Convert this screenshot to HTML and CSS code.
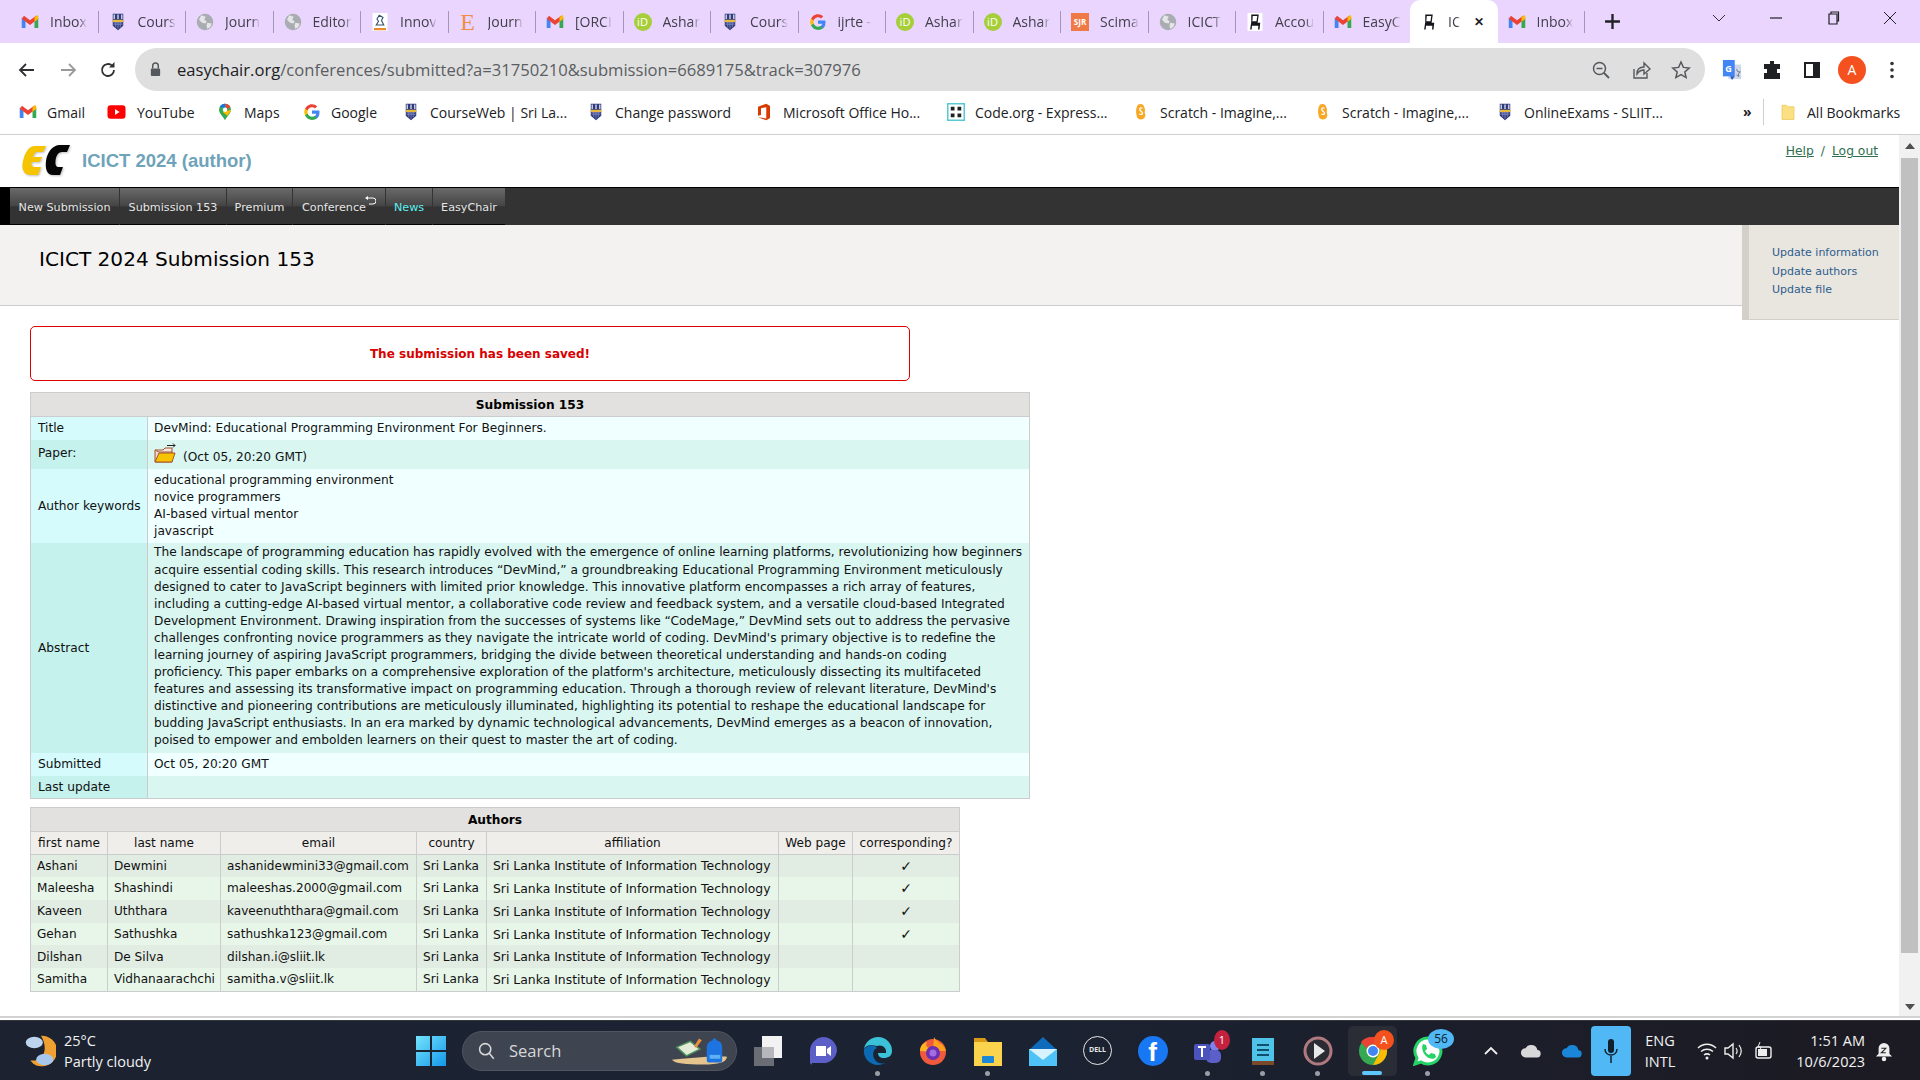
FILE: index.html
```html
<!DOCTYPE html>
<html lang="en">
<head>
<meta charset="utf-8">
<title>ICICT 2024 Submission 153</title>
<link rel="stylesheet" href="styles.css">
</head>
<body>
<svg class="defs" width="0" height="0" aria-hidden="true">
  <defs>
    <linearGradient id="wing" x1="0" y1="0" x2="1" y2="1"><stop offset="0" stop-color="#74e4fc"/><stop offset="1" stop-color="#1497ea"/></linearGradient>
  </defs>
  <symbol id="gmail" viewBox="0 0 24 24">
    <path d="M1 6v14h5V10z" fill="#4285f4"/><path d="M23 6v14h-5V10z" fill="#34a853"/>
    <path d="M1 7.500 4 3.500l8 6 8-6 3 4-11 8.500z" fill="#ea4335"/><path d="M18 6l2-2.500c1.500-1 3-.3 3 1.500v3l-5 3.500z" fill="#fbbc04"/>
  </symbol>
  <symbol id="sliit" viewBox="0 0 18 24">
    <path d="M2 1h14v16l-7 6-7-6z" fill="#2e3a7c"/><rect x="3" y="2" width="2" height="6" fill="#c9cbe0"/><rect x="8" y="2" width="2" height="6" fill="#c9cbe0"/><rect x="13" y="2" width="2" height="6" fill="#c9cbe0"/>
    <rect x="2" y="9" width="14" height="3" fill="#e8b93a"/><path d="M3 13h12M3 15h12M6 12v7M9 12v9M12 12v7" stroke="#8b90c0" stroke-width="1"/>
  </symbol>
  <symbol id="globe" viewBox="0 0 24 24">
    <circle cx="12" cy="12" r="11" fill="#a9adb2"/><path d="M7 3l6 2-2 4 3 2-1 3-5-1-4-4zM15 13l6 1-2 5-4 2-1-4z" fill="#e4e5e7"/>
  </symbol>
  <symbol id="chair" viewBox="0 0 20 24">
    <rect width="20" height="24" fill="#fff"/><path d="M5 2h10l-1.500 11H17l-1 9h-2l.5-5H6l-.5 5h-2L5 12z" fill="#14141c"/><path d="M7 4h6l-1 7H6.500z" fill="#fff"/>
  </symbol>
  <symbol id="gg" viewBox="0 0 24 24">
    <path d="M22 12.300c0-.8-.1-1.500-.2-2.200H12v4.200h5.700a5 5 0 0 1-2.100 3.200v2.700h3.400c2-1.800 3-4.600 3-7.900z" fill="#4285f4"/>
    <path d="M12 22.500c2.800 0 5.200-.9 7-2.500l-3.400-2.700c-1 .6-2.200 1-3.600 1-2.700 0-5-1.800-5.800-4.300H2.700v2.800a10.500 10.500 0 0 0 9.300 5.700z" fill="#34a853"/>
    <path d="M6.200 14a6.300 6.300 0 0 1 0-4V7.200H2.700a10.500 10.500 0 0 0 0 9.600z" fill="#fbbc04"/>
    <path d="M12 5.700c1.500 0 2.900.5 4 1.500l3-3A10.500 10.500 0 0 0 2.700 7.200L6.200 10C7 7.500 9.300 5.700 12 5.700z" fill="#ea4335"/>
  </symbol>
  <symbol id="scratch" viewBox="0 0 16 24">
    <path d="M4 2c4-2 8 0 8 3 2 3 1 5 1 8 2 4 0 9-5 9-3 0-6-2-6-6-1-4-1-10 2-14z" fill="#f9a825"/><path d="M10 7c-4-2-5 2-2 4s3 5-2 4" fill="none" stroke="#fff" stroke-width="1.800"/>
  </symbol>
</svg>

<header class="tabstrip">
  <div class="tab"><svg class="fav"><use href="#gmail"/></svg><span class="tab-label">Inbox</span></div>
  <div class="tab"><svg class="fav"><use href="#sliit"/></svg><span class="tab-label">Cours</span></div>
  <div class="tab"><svg class="fav"><use href="#globe"/></svg><span class="tab-label">Journ</span></div>
  <div class="tab"><svg class="fav"><use href="#globe"/></svg><span class="tab-label">Editor</span></div>
  <div class="tab"><svg class="fav" viewBox="0 0 20 24"><rect width="20" height="24" fill="#fff"/><path d="M9 3l5 3-2 4 3 6H5l3-5-2-3z" fill="none" stroke="#35506b" stroke-width="1.500"/><rect x="2" y="20" width="16" height="3" fill="#e98a2e"/></svg><span class="tab-label">Innov</span></div>
  <div class="tab"><span class="fav fav-e">E</span><span class="tab-label">Journ</span></div>
  <div class="tab"><svg class="fav"><use href="#gmail"/></svg><span class="tab-label">[ORCI</span></div>
  <div class="tab"><span class="fav fav-orcid">iD</span><span class="tab-label">Ashar</span></div>
  <div class="tab"><svg class="fav"><use href="#sliit"/></svg><span class="tab-label">Cours</span></div>
  <div class="tab"><svg class="fav"><use href="#gg"/></svg><span class="tab-label">ijrte -</span></div>
  <div class="tab"><span class="fav fav-orcid">iD</span><span class="tab-label">Ashar</span></div>
  <div class="tab"><span class="fav fav-orcid">iD</span><span class="tab-label">Ashar</span></div>
  <div class="tab"><span class="fav fav-sjr">SJR</span><span class="tab-label">Scima</span></div>
  <div class="tab"><svg class="fav"><use href="#globe"/></svg><span class="tab-label">ICICT</span></div>
  <div class="tab"><svg class="fav"><use href="#chair"/></svg><span class="tab-label">Accou</span></div>
  <div class="tab tab-before"><svg class="fav"><use href="#gmail"/></svg><span class="tab-label">EasyC</span></div>
  <div class="tab tab-active"><svg class="fav"><use href="#chair"/></svg><span class="tab-label tab-label-short">IC</span><span class="tab-x">✕</span></div>
  <div class="tab"><svg class="fav"><use href="#gmail"/></svg><span class="tab-label">Inbox</span></div>
  <svg class="newtab" viewBox="0 0 16 16"><path d="M8 1v14M1 8h14" stroke="#202124" stroke-width="2.200"/></svg>
  <div class="winctl">
    <svg class="winicon" viewBox="0 0 14 14"><path d="M1 4l6 6 6-6" fill="none" stroke="#333" stroke-width="1"/></svg>
    <svg class="winicon" viewBox="0 0 14 14"><path d="M1 7h12" stroke="#222" stroke-width="1.200"/></svg>
    <svg class="winicon" viewBox="0 0 14 14"><path d="M3 3h8v10H3zM5 3V1h7.500v9H11" fill="none" stroke="#222" stroke-width="1.200"/></svg>
    <svg class="winicon" viewBox="0 0 14 14"><path d="M1 1l12 12M13 1L1 13" stroke="#222" stroke-width="1"/></svg>
  </div>
</header>

<div class="toolbar">
  <svg class="tool" viewBox="0 0 20 20"><path d="M17 10H3M9 4l-6 6 6 6" fill="none" stroke="#2f3033" stroke-width="1.800"/></svg>
  <svg class="tool" viewBox="0 0 20 20"><path d="M3 10h14M11 4l6 6-6 6" fill="none" stroke="#9a9a9d" stroke-width="1.800"/></svg>
  <svg class="tool tool-reload" viewBox="0 0 20 20"><path d="M16 10a6 6 0 1 1-1.800-4.300" fill="none" stroke="#2f3033" stroke-width="1.800"/><path d="M16.500 2v5.500H11z" fill="#2f3033"/></svg>
  <div class="omnibox">
    <svg class="lock" viewBox="0 0 14 18"><path d="M4 8V5a3 3 0 0 1 6 0v3" fill="none" stroke="#55585c" stroke-width="1.600"/><rect x="2" y="8" width="10" height="8" rx="1" fill="#55585c"/></svg>
    <span class="url"><span class="url-host">easychair.org</span>/conferences/submitted?a=31750210&amp;submission=6689175&amp;track=307976</span>
    <svg class="omni-icon" viewBox="0 0 20 20"><circle cx="8.500" cy="8.500" r="6" fill="none" stroke="#55585c" stroke-width="1.500"/><path d="M13 13l5 5" stroke="#55585c" stroke-width="1.800"/><path d="M5.500 8.500h6" stroke="#55585c" stroke-width="1.500"/></svg>
    <svg class="omni-icon" viewBox="0 0 20 20"><path d="M3 9v9h13v-5" fill="none" stroke="#55585c" stroke-width="1.400"/><path d="M6 14c0-5 3-7 7-7V3l6 6-6 5v-4c-3 0-5 1-7 4z" fill="none" stroke="#55585c" stroke-width="1.400"/></svg>
    <svg class="omni-icon" viewBox="0 0 20 20"><path d="M10 2l2.400 5.400 5.800.6-4.400 3.900 1.300 5.700L10 14.700l-5.100 2.900 1.300-5.700L1.800 8l5.800-.6z" fill="none" stroke="#55585c" stroke-width="1.500"/></svg>
  </div>
  <div class="tool-right">
    <svg class="ext" viewBox="0 0 22 24"><rect x="7" y="6" width="14" height="16" fill="#cfd8ea"/><path d="M1 1h13v18H1z" fill="#4285f4"/><path d="M9 19h5l-3 4z" fill="#2a56c6"/><text class="ext-g" x="3.500" y="14">G</text><path d="M16 11l1.200 2.800 3 .3-2.200 2 .6 3-2.600-1.500" fill="none" stroke="#6b7280" stroke-width="1"/></svg>
    <svg class="ext" viewBox="0 0 20 20"><path d="M8 1h4v3h6v5h-3v4h3v6H2v-6h3V9H2V4h6z" fill="#1f2023"/></svg>
    <svg class="ext" viewBox="0 0 20 20"><rect x="2" y="2" width="16" height="16" fill="#1f2023"/><rect x="4" y="4" width="7" height="12" fill="#fff"/></svg>
    <span class="avatar">A</span>
    <svg class="ext" viewBox="0 0 20 20"><circle cx="10" cy="3.500" r="1.800" fill="#333"/><circle cx="10" cy="10" r="1.800" fill="#333"/><circle cx="10" cy="16.500" r="1.800" fill="#333"/></svg>
  </div>
</div>

<nav class="bookmarks">
  <span class="bm bm-gmail"><svg class="fav"><use href="#gmail"/></svg>Gmail</span>
  <span class="bm bm-yt"><svg class="fav fav-wide" viewBox="0 0 24 24"><rect x="0" y="3" width="24" height="18" rx="4" fill="#f00"/><path d="M10 8v8l6-4z" fill="#fff"/></svg>YouTube</span>
  <span class="bm bm-maps"><svg class="fav" viewBox="0 0 24 24"><path d="M12 1a8 8 0 0 1 8 8c0 5-5 8-8 14C9 17 4 14 4 9a8 8 0 0 1 8-8z" fill="#34a853"/><path d="M5 5a8 8 0 0 1 7-4v6z" fill="#1a73e8"/><path d="M12 1a8 8 0 0 1 7 4l-5 4z" fill="#ea4335"/><path d="M20 9c0 3-3 5-5 8L9 12z" fill="#fbbc04"/><circle cx="12" cy="9" r="3" fill="#fff"/></svg>Maps</span>
  <span class="bm bm-google"><svg class="fav"><use href="#gg"/></svg>Google</span>
  <span class="bm bm-cw"><svg class="fav"><use href="#sliit"/></svg>CourseWeb | Sri La...</span>
  <span class="bm bm-pw"><svg class="fav"><use href="#sliit"/></svg>Change password</span>
  <span class="bm bm-ms"><svg class="fav" viewBox="0 0 24 24"><path d="M4 5l11-4 5 3v16l-5 3-11-4 11 1.500V5.500L8 7v9l-4 1z" fill="#d83b01"/></svg>Microsoft Office Ho...</span>
  <span class="bm bm-code"><svg class="fav" viewBox="0 0 24 24"><rect x="1" y="1" width="22" height="22" fill="#fff" stroke="#59cad3" stroke-width="2"/><path d="M5 5h5v5H5zM14 5h5v5h-5zM5 14h5v5H5zM14 14h5v5h-5z" fill="#222"/></svg>Code.org - Express...</span>
  <span class="bm bm-sc"><svg class="fav"><use href="#scratch"/></svg>Scratch - Imagine,...</span>
  <span class="bm bm-sc"><svg class="fav"><use href="#scratch"/></svg>Scratch - Imagine,...</span>
  <span class="bm bm-oe"><svg class="fav"><use href="#sliit"/></svg>OnlineExams - SLIIT...</span>
  <span class="bm-more">»</span>
  <span class="bm bm-all"><svg class="fav" viewBox="0 0 24 24"><path d="M4 3h6l2 2h8v17H4z" fill="#fbe083" stroke="#e9c75a"/></svg>All Bookmarks</span>
</nav>

<main class="viewport">
  <div class="page">
    <div class="ec-head">
      <div class="ec-brand">
        <svg class="ec-logo" viewBox="0 0 48 32">
          <path d="M13 1h11l-3 6h-6c-2 0-3 2-4 5h9l-2.500 5h-8c-.5 3 .5 5 3 5h6.500l-3 8H8C2 30-1 24 1 16 3 7 7 1 13 1z" fill="#f6c400"/>
          <path d="M38 0h10l-3 7h-5c-4 0-6 4-6.500 9-.3 4 .5 6 3.500 6h4l-3 8h-7c-6 0-8-6-7-14S30 0 38 0z" fill="#050505"/>
        </svg>
        <span class="ec-title">ICICT 2024 (author)</span>
      </div>
      <div class="ec-user"><a class="ec-link">Help</a><span class="ec-slash">/</span><a class="ec-link">Log out</a></div>
    </div>
    <div class="menubar">
      <span class="mi mi-1">New Submission</span>
      <span class="mi mi-2">Submission 153</span>
      <span class="mi mi-3">Premium</span>
      <span class="mi mi-4">Conference<svg class="mi-ret" viewBox="0 0 12 10"><path d="M3 2h6a2 2 0 0 1 0 6H5" fill="none" stroke="#fff"/><path d="M4 0L1 2l3 2z" fill="#fff"/></svg></span>
      <span class="mi mi-5 mi-news">News</span>
      <span class="mi mi-6">EasyChair</span>
    </div>
    <div class="titlebar"><h1 class="page-title">ICICT 2024 Submission 153</h1></div>
    <aside class="side">
      <a class="side-link">Update information</a>
      <a class="side-link">Update authors</a>
      <a class="side-link">Update file</a>
    </aside>
    <div class="content">
      <div class="alert">The submission has been saved!</div>
      <table class="info">
        <colgroup><col class="ci-1"><col class="ci-2"></colgroup>
        <thead><tr><th colspan="2" class="t-head">Submission 153</th></tr></thead>
        <tbody>
          <tr class="r-title"><td class="lab">Title</td><td class="val">DevMind: Educational Programming Environment For Beginners.</td></tr>
          <tr class="r-paper"><td class="lab lab-top">Paper:</td><td class="val val-paper"><div class="paper-cell"><svg class="folder" viewBox="0 0 22 20"><path d="M1 7h8l2-2h7v4" fill="#f3e7e0" stroke="#a8502a"/><path d="M1 19V7l4 2h13v10z" fill="#e9dcd4" stroke="#a8502a"/><path d="M1 19l4-9h16l-3 9z" fill="#f6c400" stroke="#a8502a"/><path d="M13 2.500h8M19 .5l2 2-2 2" fill="none" stroke="#222"/></svg><span class="paper-date">(Oct 05, 20:20 GMT)</span></div></td></tr>
          <tr class="r-kw"><td class="lab">Author keywords</td><td class="val val-lines">educational programming environment<br>novice programmers<br>AI-based virtual mentor<br>javascript</td></tr>
          <tr class="r-abs"><td class="lab">Abstract</td><td class="val val-abs">The landscape of programming education has rapidly evolved with the emergence of online learning platforms, revolutionizing how beginners<br>acquire essential coding skills. This research introduces “DevMind,” a groundbreaking Educational Programming Environment meticulously<br>designed to cater to JavaScript beginners with limited prior knowledge. This innovative platform encompasses a rich array of features,<br>including a cutting-edge AI-based virtual mentor, a collaborative code review and feedback system, and a versatile cloud-based Integrated<br>Development Environment. Drawing inspiration from the successes of systems like “CodeMage,” DevMind sets out to address the pervasive<br>challenges confronting novice programmers as they navigate the intricate world of coding. DevMind's primary objective is to redefine the<br>learning journey of aspiring JavaScript programmers, bridging the divide between theoretical understanding and hands-on coding<br>proficiency. This paper embarks on a comprehensive exploration of the platform's architecture, meticulously dissecting its multifaceted<br>features and assessing its transformative impact on programming education. Through a thorough review of relevant literature, DevMind's<br>distinctive and pioneering contributions are meticulously illuminated, highlighting its potential to reshape the educational landscape for<br>budding JavaScript enthusiasts. In an era marked by dynamic technological advancements, DevMind emerges as a beacon of innovation,<br>poised to empower and embolden learners on their quest to master the art of coding.</td></tr>
          <tr class="r-title"><td class="lab">Submitted</td><td class="val">Oct 05, 20:20 GMT</td></tr>
          <tr class="r-last"><td class="lab">Last update</td><td class="val"></td></tr>
        </tbody>
      </table>
      <table class="authors">
        <colgroup><col class="c1"><col class="c2"><col class="c3"><col class="c4"><col class="c5"><col class="c6"><col class="c7"></colgroup>
        <thead>
          <tr><th colspan="7" class="t-head">Authors</th></tr>
          <tr class="a-head"><td>first name</td><td>last name</td><td>email</td><td>country</td><td>affiliation</td><td>Web page</td><td>corresponding?</td></tr>
        </thead>
        <tbody>
          <tr><td>Ashani</td><td>Dewmini</td><td>ashanidewmini33@gmail.com</td><td>Sri Lanka</td><td class="aff">Sri Lanka Institute of Information Technology</td><td></td><td class="chk">✓</td></tr>
          <tr><td>Maleesha</td><td>Shashindi</td><td>maleeshas.2000@gmail.com</td><td>Sri Lanka</td><td class="aff">Sri Lanka Institute of Information Technology</td><td></td><td class="chk">✓</td></tr>
          <tr><td>Kaveen</td><td>Uththara</td><td>kaveenuththara@gmail.com</td><td>Sri Lanka</td><td class="aff">Sri Lanka Institute of Information Technology</td><td></td><td class="chk">✓</td></tr>
          <tr><td>Gehan</td><td>Sathushka</td><td>sathushka123@gmail.com</td><td>Sri Lanka</td><td class="aff">Sri Lanka Institute of Information Technology</td><td></td><td class="chk">✓</td></tr>
          <tr><td>Dilshan</td><td>De Silva</td><td>dilshan.i@sliit.lk</td><td>Sri Lanka</td><td class="aff">Sri Lanka Institute of Information Technology</td><td></td><td class="chk"></td></tr>
          <tr><td>Samitha</td><td>Vidhanaarachchi</td><td>samitha.v@sliit.lk</td><td>Sri Lanka</td><td class="aff">Sri Lanka Institute of Information Technology</td><td></td><td class="chk"></td></tr>
        </tbody>
      </table>
    </div>
  </div>
  <div class="scrollbar">
    <span class="sb-up"></span>
    <span class="sb-thumb"></span>
    <span class="sb-down"></span>
  </div>
</main>

<footer class="taskbar">
  <div class="weather">
    <svg class="wx" viewBox="0 0 32 40"><path d="M17 4a16 16 0 0 1 2 32C10 37 6 30 6 30c9 1 15-5 15-13 0-5-2-10-4-13z" fill="#f0a030"/><ellipse cx="10" cy="11" rx="9" ry="6" fill="#bcd4ee"/><ellipse cx="21" cy="29" rx="9" ry="6" fill="#a7c8ec"/></svg>
    <div class="wx-text"><span class="wx-temp">25°C</span><span class="wx-desc">Partly cloudy</span></div>
  </div>
  <div class="tb-center">
    <span class="tb-cell tb-start"><svg class="tb-icon tb-win" viewBox="0 0 30 30"><path d="M0 0h14v14H0zM16 0h14v14H16zM0 16h14v14H0zM16 16h14v14H16z" fill="url(#wing)"/></svg></span>
    <div class="searchbox">
      <svg class="search-ic" viewBox="0 0 20 20"><circle cx="8" cy="8" r="6.200" fill="none" stroke="#d8d8d8" stroke-width="1.700"/><path d="M12.500 12.500l5 6" stroke="#d8d8d8" stroke-width="1.700"/></svg>
      <span class="search-text">Search</span>
      <svg class="search-art" viewBox="0 0 60 30">
        <path d="M2 24c15-1 45-5 57-3-1 6-8 8-25 8-17 0-29-1-32-5z" fill="#e6c48e"/>
        <path d="M7 11l14-6 10 8-14 7z" fill="#e4ecd8" stroke="#4f8f5c" stroke-width="1.500"/>
        <path d="M25 10l5-8 3 2-6 8z" fill="#ef8b3a"/>
        <path d="M38 12c0-5 3-7 6-8 0-3 4-3 4 0 4 1 6 3 6 8v12c0 2-1 3-3 3h-10c-2 0-3-1-3-3z" fill="#1d73e0"/>
        <path d="M41 19h11v4H41z" fill="#5db2f5"/>
      </svg>
    </div>
    <span class="tb-cell"><svg class="tb-icon" viewBox="0 0 30 30"><rect x="1" y="11" width="20" height="19" fill="#6a6e74"/><rect x="9" y="0" width="20" height="22" fill="#f2f2f2"/><rect x="9" y="11" width="12" height="11" fill="#b5b7ba"/></svg></span>
    <span class="tb-cell"><svg class="tb-icon" viewBox="0 0 30 30"><path d="M15 1a14 14 0 0 1 14 14v0a14 14 0 0 1-14 12H4v2l-2-2V15A14 14 0 0 1 15 1z" fill="#5b5fc7"/><path d="M8 10h10v10H8zM19 13l4-3v10l-4-3z" fill="#fff"/></svg></span>
    <span class="tb-cell tb-on"><svg class="tb-icon" viewBox="0 0 30 30"><path d="M15 1a14 14 0 0 1 14 14c0 5-4 7-8 7-4 0-6-2-6-5h8c1-5-4-9-9-7C5 8 2 11 1 13 2 6 8 1 15 1z" fill="#3cc2d8"/><path d="M1 13c3-4 11-5 13-1-5 2-5 9-1 13 2 2 5 3 9 2-2 1-5 2-7 2A14 14 0 0 1 1 13z" fill="#0c6ab4"/></svg></span>
    <span class="tb-cell"><svg class="tb-icon" viewBox="0 0 30 30"><circle cx="15" cy="16" r="13" fill="#f05a3c"/><path d="M16 1c2 5 10 6 12 14H15z" fill="#ff9f1c"/><path d="M2 15c0-5 3-8 7-9-2 4 0 6 4 6l2 4z" fill="#ffb521"/><circle cx="15" cy="17" r="7" fill="#6b2fb3"/><circle cx="15" cy="17" r="3.500" fill="#a06ee0"/></svg></span>
    <span class="tb-cell tb-on"><svg class="tb-icon" viewBox="0 0 30 30"><path d="M1 7V2h11l3 4z" fill="#d99a1a"/><path d="M1 6h28v24H1z" fill="#fcd34d"/><rect x="9" y="20" width="12" height="7" rx="1" fill="#1d88d8"/></svg></span>
    <span class="tb-cell"><svg class="tb-icon" viewBox="0 0 30 30"><path d="M1 14L15 1l14 13v16H1z" fill="#0f6cbd"/><path d="M1 13h28v17H1z" fill="#4fc3f7"/><path d="M1 13l14 11 14-11z" fill="#d6f3ff"/></svg></span>
    <span class="tb-cell"><span class="dell">DELL</span></span>
    <span class="tb-cell"><span class="fb">f</span></span>
    <span class="tb-cell tb-on tb-badged"><svg class="tb-icon" viewBox="0 0 30 30"><circle cx="22" cy="10" r="5" fill="#7b83eb"/><rect x="13" y="14" width="15" height="13" rx="5" fill="#5b5fc7"/><rect x="1" y="8" width="16" height="16" rx="2" fill="#4b53bc"/><path d="M5 11h8M9 11v10" stroke="#fff" stroke-width="2"/></svg><span class="badge badge-red">1</span></span>
    <span class="tb-cell tb-on"><svg class="tb-icon" viewBox="0 0 30 30"><rect x="4" y="2" width="22" height="27" fill="#4fc3e8"/><rect x="4" y="25" width="22" height="4" fill="#7a4a2a"/><path d="M9 9h12M9 14h12M9 19h12" stroke="#10506e" stroke-width="2"/></svg></span>
    <span class="tb-cell tb-on"><svg class="tb-icon" viewBox="0 0 30 30"><circle cx="15" cy="15" r="13" fill="#2b2b33" stroke="#b07a80" stroke-width="3"/><path d="M11 7l11 8-11 8z" fill="#e8e8e8"/></svg></span>
    <span class="tb-cell tb-active tb-badged"><svg class="tb-icon" viewBox="0 0 30 30"><circle cx="15" cy="15" r="14" fill="#34a853"/><path d="M15 1a14 14 0 0 1 12.500 7.500H15a7 7 0 0 0-6.500 4L3 6a14 14 0 0 1 12-5z" fill="#ea4335"/><path d="M27.500 8.500A14 14 0 0 1 15 29l6-11a7 7 0 0 0-1-9.500z" fill="#fbbc04"/><circle cx="15" cy="15" r="6.500" fill="#fff"/><circle cx="15" cy="15" r="5" fill="#4285f4"/></svg><span class="badge badge-avatar">A</span></span>
    <span class="tb-cell tb-on tb-badged"><svg class="tb-icon" viewBox="0 0 30 30"><path d="M15 2a13 13 0 0 0-11 20l-2 6 6-2a13 13 0 1 0 7-24z" fill="#fff" stroke="#25d366" stroke-width="3"/><path d="M10 8l3 1 1 4-2 2c1 2 2 3 4 4l2-2 4 1 1 3c-2 3-7 2-10-1s-5-8-3-12z" fill="#25d366"/></svg><span class="badge badge-blue">56</span></span>
  </div>
  <div class="tray">
    <svg class="tray-chev" viewBox="0 0 14 10"><path d="M1 8l6-6 6 6" fill="none" stroke="#eee" stroke-width="1.800"/></svg>
    <svg class="tray-cloud tray-cloud-a" viewBox="0 0 24 16"><path d="M6 15a5 5 0 0 1 0-10 7 7 0 0 1 13 2 4 4 0 0 1-1 8z" fill="#d8d8da"/></svg>
    <svg class="tray-cloud tray-cloud-b" viewBox="0 0 24 16"><path d="M6 15a5 5 0 0 1 0-10 7 7 0 0 1 13 2 4 4 0 0 1-1 8z" fill="#1a86d8"/></svg>
    <span class="mic"><svg class="mic-ic" viewBox="0 0 16 26"><rect x="5" y="1" width="6" height="14" rx="3" fill="#10202c"/><path d="M2 11c0 8 12 8 12 0M8 18v7" fill="none" stroke="#10202c" stroke-width="1.500"/></svg></span>
    <span class="lang"><span>ENG</span><span>INTL</span></span>
    <svg class="tray-sym sym-wifi" viewBox="0 0 20 20"><path d="M1 7c5-5 13-5 18 0M4 10.500c3.500-3 8.500-3 12 0M7 14c2-1.500 4-1.500 6 0" fill="none" stroke="#eee" stroke-width="1.500"/><circle cx="10" cy="17" r="1.500" fill="#eee"/></svg>
    <svg class="tray-sym sym-vol" viewBox="0 0 20 20"><path d="M2 7h3l5-4v14l-5-4H2z" fill="none" stroke="#eee" stroke-width="1.400"/><path d="M13 7c1.500 2 1.500 4 0 6M16 4c3 4 3 8 0 12" fill="none" stroke="#eee" stroke-width="1.200"/></svg>
    <svg class="tray-sym sym-bat" viewBox="0 0 20 20"><rect x="2" y="6" width="15" height="11" rx="2" fill="none" stroke="#eee" stroke-width="1.400"/><rect x="4" y="8" width="9" height="7" fill="#eee"/><path d="M6 1l-2 5h3l-1 4" fill="none" stroke="#eee"/></svg>
    <span class="clock"><span>1:51 AM</span><span>10/6/2023</span></span>
    <svg class="tray-bell" viewBox="0 0 20 24"><path d="M10 3a6 6 0 0 1 6 6v6l3 3H1l3-3V9a6 6 0 0 1 6-6z" fill="#eee"/><circle cx="10" cy="21" r="2.500" fill="#eee"/><path d="M7 9h5l-5 5h5" fill="none" stroke="#222" stroke-width="1.200"/></svg>
  </div>
</footer>
</body>
</html>
```

FILE: styles.css
```css
* { box-sizing: border-box; }
html, body { margin: 0; height: 1080px; overflow: hidden; }
body { display: flex; flex-direction: column; width: 1920px; background: #fff; font-family: "Open Sans", "Noto Sans", sans-serif; color: #202124; }
.defs { position: absolute; }
svg { display: block; flex: none; }

/* tab strip */
.tabstrip { display: flex; align-items: center; height: 43px; padding-left: 11px; background: #e9d5fe; flex: none; }
.tab { display: flex; align-items: center; gap: 11px; width: 87.500px; height: 22px; padding-left: 10px; border-right: 1px solid #a795b8; flex: none; }
.tab-before { border-right-color: transparent; }
.tab-active { height: 43px; background: #fff; border-right: 0; border-radius: 10px 10px 0 0; gap: 10px; }
.tab + .tab-active { margin-left: -1px; }
.fav { width: 18px; height: 18px; flex: none; }
.fav-wide { width: 21px; }
.tab-label { font-size: 14px; color: #43404a; white-space: nowrap; -webkit-mask-image: linear-gradient(90deg, #000 78%, transparent); mask-image: linear-gradient(90deg, #000 78%, transparent); }
.tab-label-short { width: 12px; }
.tab-x { font-size: 12px; font-weight: 700; color: #202124; margin-left: 4px; }
.fav-e { font-family: "Liberation Serif", serif; font-size: 24px; line-height: 18px; color: #ef8f45; text-align: center; }
.fav-orcid { border-radius: 50%; background: #a6ce39; color: #fff; font-size: 11px; line-height: 18px; text-align: center; }
.fav-sjr { background: #ef7a45; color: #fff; font-size: 8px; font-weight: 700; line-height: 18px; text-align: center; }
.newtab { width: 17px; height: 17px; margin-left: 19px; }
.winctl { display: flex; align-items: center; margin-left: auto; padding-right: 23px; gap: 43px; margin-top: -8px; }
.winicon { width: 14px; height: 14px; }

/* toolbar */
.toolbar { display: flex; align-items: center; height: 49px; padding: 5px 0 1px 17px; background: #fff; flex: none; }
.tool { width: 20px; height: 20px; margin-right: 21px; }
.tool-reload { margin-left: -1px; }
.omnibox { display: flex; align-items: center; width: 1570px; height: 43px; margin-left: -4px; padding: 0 14px; border-radius: 22px; background: #dfdfdf; flex: none; }
.lock { width: 13px; height: 17px; margin-right: 15px; }
.url { font-size: 16.600px; color: #5a5d62; white-space: nowrap; flex: 1; }
.url-host { color: #202124; }
.omni-icon { width: 20px; height: 20px; margin-left: 20px; }
.tool-right { display: flex; align-items: center; gap: 20px; margin-left: 17px; }
.ext { width: 20px; height: 22px; }
.ext-g { font-size: 10px; font-weight: 700; fill: #fff; }
.avatar { width: 28px; height: 28px; margin: 0 -4px; border-radius: 50%; background: #f4511e; color: #fff; font-size: 14px; line-height: 28px; text-align: center; }

/* bookmarks */
.bookmarks { display: flex; align-items: center; height: 43px; padding: 0 0 2px 19px; border-bottom: 1px solid #cfcfcf; flex: none; font-size: 14px; color: #202124; }
.bm { display: flex; align-items: center; gap: 10px; white-space: nowrap; flex: none; }
.bm-gmail { width: 87px; }
.bm-yt { width: 110px; }
.bm-maps { width: 87px; }
.bm-google { width: 99px; }
.bm-cw { width: 185px; }
.bm-pw { width: 168px; }
.bm-ms { width: 192px; }
.bm-code { width: 185px; }
.bm-sc { width: 182px; }
.bm-oe { width: 247px; }
.bm-more { width: 21px; height: 26px; font-weight: 700; line-height: 26px; border-right: 1px solid #cfcfcf; }
.bm-all { margin-left: 15px; }

/* page */
.viewport { display: flex; height: 883px; flex: none; border-bottom: 2px solid #d2d2d2; overflow: hidden; }
.page { position: relative; flex: 1; min-width: 0; font-family: "DejaVu Sans", Verdana, sans-serif; font-size: 12px; color: #111; }
.ec-head { display: flex; justify-content: space-between; height: 52px; padding: 9px 21px 0 22px; }
.ec-brand { display: flex; align-items: center; gap: 12px; height: 32px; margin-top: 1px; }
.ec-logo { width: 48px; height: 32px; filter: drop-shadow(1px 1px 1px rgba(0, 0, 0, .25)); }
.ec-title { font-family: "Liberation Sans", Arial, sans-serif; font-size: 18.500px; font-weight: 700; color: #6ea3b9; }
.ec-user { display: flex; gap: 7px; font-size: 12.300px; color: #2e6e4e; }
.ec-link { text-decoration: underline; }
.menubar { display: flex; height: 38px; padding-left: 10px; gap: 1px; background: linear-gradient(90deg, #000 10px, #333 10px); border-top: 1px solid #000; }
.mi { position: relative; display: flex; align-items: center; justify-content: center; height: 37px; padding-top: 2px; border-bottom: 1px solid #000; background: linear-gradient(#6a6a6a, #444 50%, #333 52%); color: #e6e6e6; font-size: 11.200px; white-space: nowrap; }
.mi-1 { width: 109px; }
.mi-2 { width: 106px; }
.mi-3 { width: 65px; }
.mi-4 { width: 92px; justify-content: flex-start; padding-left: 9px; }
.mi-5 { width: 46px; }
.mi-6 { width: 72px; }
.mi-news { color: #5ff0f0; }
.mi-ret { position: absolute; top: 8px; right: 9px; width: 12px; height: 10px; }
.titlebar { height: 81px; padding: 21px 0 0 39px; background: #f3f2f1; border-bottom: 1px solid #ccc; }
.page-title { margin: 0; font-family: "DejaVu Sans", sans-serif; font-size: 20.100px; font-weight: 400; line-height: 26px; color: #000; }
.side { position: absolute; top: 90px; right: 0; width: 157px; height: 95px; display: flex; flex-direction: column; padding: 20px 0 0 23px; gap: 3.500px; background: #e9e5df; border-left: 7px solid #d5cfca; border-bottom: 1px solid #d5cfca; font-size: 11px; line-height: 15px; color: #2c5e8e; }
.content { padding: 20px 0 0 30px; }
.alert { display: flex; align-items: center; justify-content: center; width: 880px; height: 55px; padding-left: 20px; border: 1px solid #e00000; border-radius: 5px; color: #d80000; font-weight: 700; font-size: 12px; }
table { border-collapse: collapse; table-layout: fixed; font-size: 12px; }
.info { width: 999px; margin-top: 11px; border: 1px solid #ccc; font-size: 12.200px; }
.ci-1 { width: 117px; }
.ci-2 { width: 882px; }
.t-head { height: 24px; padding: 0; background: #e2e1df; font-size: 12.200px; font-weight: 700; text-align: center; color: #000; border: 1px solid #ccc; }
.lab { padding: 0 0 0 7px; border-right: 1px solid #ccc; }
.val { padding: 0 6px; }
.r-title { height: 23px; }
.r-title .lab { background: #d6fbfd; }
.r-title .val { background: #f0ffff; }
.r-paper { height: 29px; }
.r-paper .lab, .r-abs .lab, .r-last .lab { background: #c5f2ed; }
.r-paper .val, .r-abs .val, .r-last .val { background: #d9f6f1; }
.r-kw { height: 74px; }
.r-kw .lab { background: #d6fbfd; }
.r-kw .val { background: #f0ffff; }
.r-abs { height: 210px; }
.r-last { height: 23px; }
.val-lines { line-height: 17px; }
.val-abs { padding-bottom: 1px; line-height: 17.100px; white-space: nowrap; }
.val-paper { padding-top: 3px; vertical-align: top; }
.paper-cell { display: flex; align-items: flex-start; gap: 7px; height: 25px; }
.lab-top { padding-bottom: 3px; }
.folder { width: 22px; height: 20px; }
.paper-date { margin-top: 7px; line-height: 15px; }
.authors { width: 929px; margin-top: 8px; border: 1px solid #ccc; }
.c1 { width: 77px; }
.c2 { width: 113px; }
.c3 { width: 196px; }
.c4 { width: 70px; }
.c5 { width: 292px; }
.c6 { width: 74px; }
.c7 { width: 107px; }
.authors td { height: 22.800px; padding: 0 6px; font-size: 12.100px; white-space: nowrap; border-right: 1px solid #ccc; }
.authors tbody tr:nth-child(odd) td { background: #e1ece3; }
.authors tbody tr:nth-child(even) td { background: #e8f6ea; }
.authors .a-head td { background: #efeeea; text-align: center; border-bottom: 1px solid #ccc; }
.authors .chk { font-size: 14px; text-align: center; }
.authors .aff { font-size: 12.400px; }

/* scrollbar */
.scrollbar { display: flex; flex-direction: column; align-items: center; width: 21px; background: #f1f1f1; flex: none; }
.sb-up, .sb-down { width: 0; height: 0; border-left: 5px solid transparent; border-right: 5px solid transparent; flex: none; }
.sb-up { margin: 8px 0 9px; border-bottom: 6px solid #505050; }
.sb-thumb { width: 17px; height: 795px; background: #c0c0c0; flex: none; }
.sb-down { margin-top: auto; margin-bottom: 6px; border-top: 6px solid #505050; }

/* taskbar */
.taskbar { display: flex; align-items: center; height: 60px; margin-top: 2px; background: linear-gradient(90deg, #1c2230, #1b2333 50%, #1c1a22); border-top: 1px solid #33363d; color: #f2f2f2; flex: none; }
.weather { display: flex; align-items: center; gap: 8px; width: 403px; padding-left: 24px; flex: none; }
.wx { width: 32px; height: 38px; }
.wx-text { display: flex; flex-direction: column; font-size: 14.500px; line-height: 21px; }
.tb-center { display: flex; align-items: center; height: 100%; }
.tb-cell { position: relative; display: flex; align-items: center; justify-content: center; width: 55px; height: 50px; flex: none; }
.tb-icon { width: 30px; height: 30px; }
.tb-on::after { content: ""; position: absolute; left: 25px; bottom: 0; width: 5px; height: 5px; border-radius: 50%; background: #9a9ea6; }
.tb-active { width: 49px; margin: 0 3px; background: #2a2d36; border-radius: 5px; }
.tb-active::after { content: ""; position: absolute; left: 14px; bottom: 1px; width: 20px; height: 4px; border-radius: 2px; background: #5cc8ff; }
.searchbox { display: flex; align-items: center; width: 275px; height: 40px; margin-left: 4px; margin-right: 3px; padding: 0 8px 0 15px; border: 1px solid #50555f; border-radius: 20px; background: #3e4450; flex: none; }
.search-ic { width: 18px; height: 18px; margin-right: 13px; }
.search-text { font-size: 16.500px; color: #d8d8d8; flex: 1; }
.search-art { width: 58px; height: 30px; }
.dell { width: 29px; height: 29px; border: 1.500px solid #e8e8e8; border-radius: 50%; font-size: 7px; font-weight: 700; line-height: 26px; text-align: center; color: #e8e8e8; }
.fb { width: 30px; height: 30px; padding-top: 2px; border-radius: 50%; background: #1877f2; color: #fff; font-family: "Liberation Sans", sans-serif; font-size: 26px; font-weight: 700; line-height: 28px; text-align: center; }
.badge { position: absolute; display: block; border-radius: 50%; color: #fff; font-size: 11px; text-align: center; }
.badge-red { top: 4px; right: 5px; width: 16px; height: 20px; background: #c4213e; line-height: 20px; }
.badge-avatar { top: 4px; right: 3px; width: 20px; height: 20px; background: #f4511e; line-height: 20px; }
.badge-blue { top: 3px; right: 1px; width: 26px; height: 20px; background: #4fb8f5; color: #10202c; line-height: 20px; font-size: 12px; }
.tray { display: flex; align-items: center; height: 100%; margin-left: 29px; }
.tray-chev { width: 14px; height: 10px; }
.tray-cloud { width: 22px; height: 16px; }
.tray-cloud-a { margin-left: 22px; }
.tray-cloud-b { margin-left: 19px; }
.mic { display: flex; align-items: center; justify-content: center; width: 40px; height: 50px; margin-left: 8px; border-radius: 4px; background: #4fb8f5; }
.mic-ic { width: 16px; height: 26px; }
.lang { display: flex; flex-direction: column; align-items: center; width: 34px; margin-left: 12px; font-size: 14.500px; line-height: 21px; }
.tray-sym { width: 20px; height: 20px; }
.sym-wifi { margin-left: 20px; }
.sym-vol { margin-left: 6px; }
.sym-bat { margin-left: 11px; }
.clock { display: flex; flex-direction: column; align-items: flex-end; width: 74px; margin-left: 17px; font-size: 14.500px; line-height: 21px; }
.tray-bell { width: 18px; height: 22px; margin-left: 10px; }
```
